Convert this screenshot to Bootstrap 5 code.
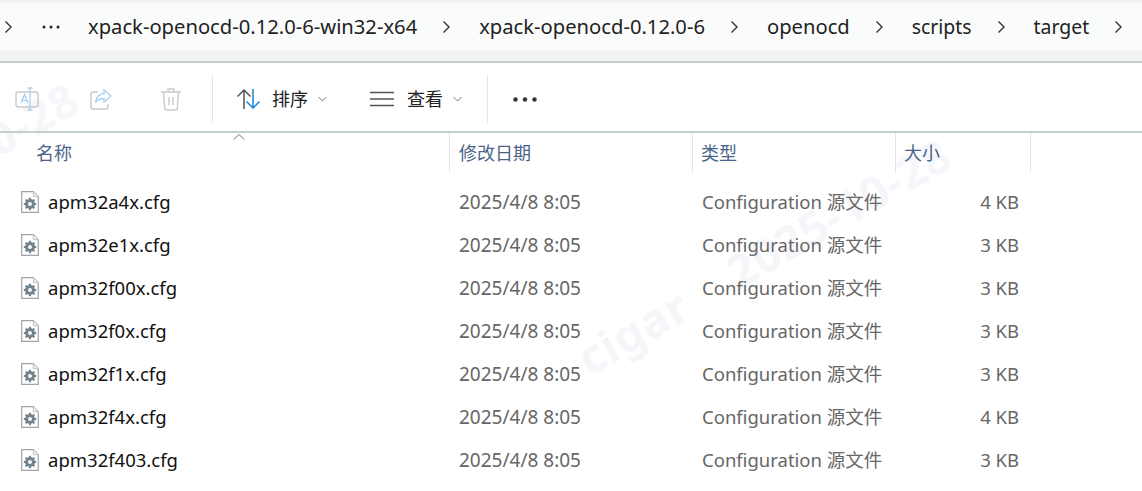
<!DOCTYPE html>
<html lang="zh-CN">

<head>
    <meta charset="UTF-8">
    <meta name="viewport" content="width=device-width, initial-scale=1.0">
    <title>target</title>
    <link href="https://cdn.jsdelivr.net/npm/bootstrap@5.3.0/dist/css/bootstrap.min.css" rel="stylesheet">
    <style>
        html, body { height: 100%; }
        body { overflow: hidden; background: #fff; font-family: "Noto Sans", "Noto Sans CJK SC", sans-serif; font-size: 19px; position: relative; }
        .top-band { height: 63px; background: #f1f4f2; border-bottom: 2px solid #c4d0c9; padding-top: 3px; }
        .crumbs { height: 47px; background: #fafbfb; color: #222; font-size: 20.2px; }
        .crumb-text { line-height: 47px; white-space: nowrap; margin-left: 28px; }
        .crumb-short { font-size: 19.4px; }
        .crumb-chev { width: 9px; height: 14px; flex: none; margin-left: 25px; }
        .crumb-first { margin-left: 4px; }
        .crumb-dots { margin-left: 29px; }
        .tool-row { height: 70px; border-bottom: 2px solid #c4d0c9; padding-left: 15px; padding-top: 4px; }
        .tool-sep { width: 1px; height: 48px; background: #e6e6e6; flex: none; }
        .tool-label { font-size: 18px; color: #222; line-height: 1; margin-left: 12px; }
        .tool-label-view { margin-left: 13px; }
        .tool-caret { margin-left: 10px; }
        .tool-share { margin-left: 48px; }
        .tool-trash { margin-left: 47px; }
        .tool-sep-a { margin-left: 30px; }
        .tool-sort { margin-left: 23px; }
        .tool-view { margin-left: 43px; }
        .tool-sep-b { margin-left: 25px; }
        .tool-more { margin-left: 25px; }
        .head-row { height: 39px; color: #4a6489; font-size: 18px; position: relative; }
        .head-cell { border-right: 1px solid #e3e3e3; padding-top: 7px; flex: none; line-height: 27px; }
        .head-name { width: 450px; padding-left: 36px; }
        .head-date { width: 243px; padding-left: 9px; }
        .head-type { width: 203px; padding-left: 8px; }
        .head-size { width: 135px; padding-left: 8px; }
        .sort-mark { position: absolute; left: 233px; top: 1px; width: 12px; height: 6px; }
        .file-list { padding-top: 9px; }
        .file-row { height: 43px; line-height: 43px; color: #666; white-space: nowrap; }
        .file-name { width: 459px; padding-left: 21px; padding-bottom: 2px; color: #111; flex: none; font-size: 18.5px; gap: 9px; }
        .file-date { width: 243px; flex: none; }
        .file-type { width: 275px; flex: none; font-size: 18.5px; line-height: 41px; }
        .file-size { width: 42px; flex: none; text-align: right; font-size: 18.5px; line-height: 41px; }
        .wm-text { position: absolute; font-size: 46px; font-weight: 700; color: #f5f6fa; white-space: nowrap; transform: rotate(-30deg); transform-origin: left bottom; pointer-events: none; letter-spacing: 1px; word-spacing: 40px; }
        .wm-one { left: 598px; top: 322px; }
        .wm-two { left: 7px; top: 104px; }
        .page-layer { position: relative; }
    </style>
</head>

<body>
    <!-- marcas de agua -->
    <div class="wm-text wm-one">cigar 2025-10-28</div>
    <div class="wm-text wm-two">0-28</div>

    <div class="page-layer">
        <div class="top-band">
            <div class="crumbs d-flex align-items-center">
                <svg class="crumb-chev crumb-first" viewBox="0 0 9 14"><path d="M1.500 1.500 7 7l-5.500 5.500" fill="none" stroke="#333" stroke-width="1.400"/></svg>
                <svg class="crumb-dots" width="18" height="4" viewBox="0 0 18 4"><circle cx="2" cy="2" r="1.500" fill="#222"/><circle cx="9" cy="2" r="1.500" fill="#222"/><circle cx="16" cy="2" r="1.500" fill="#222"/></svg>
                <span class="crumb-text">xpack-openocd-0.12.0-6-win32-x64</span>
                <svg class="crumb-chev" viewBox="0 0 9 14"><path d="M1.500 1.500 7 7l-5.500 5.500" fill="none" stroke="#333" stroke-width="1.400"/></svg>
                <span class="crumb-text">xpack-openocd-0.12.0-6</span>
                <svg class="crumb-chev" viewBox="0 0 9 14"><path d="M1.500 1.500 7 7l-5.500 5.500" fill="none" stroke="#333" stroke-width="1.400"/></svg>
                <span class="crumb-text">openocd</span>
                <svg class="crumb-chev" viewBox="0 0 9 14"><path d="M1.500 1.500 7 7l-5.500 5.500" fill="none" stroke="#333" stroke-width="1.400"/></svg>
                <span class="crumb-text crumb-short">scripts</span>
                <svg class="crumb-chev" viewBox="0 0 9 14"><path d="M1.500 1.500 7 7l-5.500 5.500" fill="none" stroke="#333" stroke-width="1.400"/></svg>
                <span class="crumb-text crumb-short">target</span>
                <svg class="crumb-chev" viewBox="0 0 9 14"><path d="M1.500 1.500 7 7l-5.500 5.500" fill="none" stroke="#333" stroke-width="1.400"/></svg>
            </div>
        </div>

        <div class="tool-row d-flex align-items-center">
            <svg width="26" height="24" viewBox="0 0 26 24" fill="none"><rect x="1" y="5" width="22" height="15" rx="2.500" stroke="#c9c9c9" stroke-width="1.400"/><path d="M6 16l3.500-8.500L13 16M7.200 13.500h4.600" stroke="#9cc9ec" stroke-width="1.200"/><path d="M15 1v22M12.500 1h5M12.500 23h5" stroke="#a8d2f2" stroke-width="1.300"/></svg>
            <svg class="tool-share" width="24" height="24" viewBox="0 0 24 24" fill="none"><path d="M9 5H4a2 2 0 0 0-2 2v13a2 2 0 0 0 2 2h13a2 2 0 0 0 2-2v-3" stroke="#c9c9c9" stroke-width="1.400"/><path d="M15 3l7 6-7 6v-3.500c-4 0-6.500 1-8.500 4 .5-5 3.500-8.500 8.500-9z" stroke="#a8d2f2" stroke-width="1.300"/></svg>
            <svg class="tool-trash" width="22" height="24" viewBox="0 0 22 24" fill="none"><path d="M1 5h20M8 5V2h6v3M3.500 5l1.200 16a2 2 0 0 0 2 2h8.600a2 2 0 0 0 2-2L18.500 5M9 10v8M13 10v8" stroke="#c9c9c9" stroke-width="1.400"/></svg>
            <div class="tool-sep tool-sep-a"></div>
            <svg class="tool-sort" width="24" height="22" viewBox="0 0 24 22" fill="none"><path d="M8 21V2M1.500 8.500 8 2l6.500 6.500" stroke="#555" stroke-width="1.500"/><path d="M17 1v19M10.500 13.500 17 20l6.500-6.500" stroke="#1a86d8" stroke-width="1.500"/></svg>
            <span class="tool-label">排序</span>
            <svg class="tool-caret" width="9" height="6" viewBox="0 0 9 6" fill="none"><path d="M.5 1 4.500 5l4-4" stroke="#777"/></svg>
            <svg class="tool-view" width="24" height="16" viewBox="0 0 24 16" fill="none"><path d="M0 1.500h24M0 8h24M0 14.500h24" stroke="#555" stroke-width="1.500"/></svg>
            <span class="tool-label tool-label-view">查看</span>
            <svg class="tool-caret" width="9" height="6" viewBox="0 0 9 6" fill="none"><path d="M.5 1 4.500 5l4-4" stroke="#777"/></svg>
            <div class="tool-sep tool-sep-b"></div>
            <svg class="tool-more" width="24" height="5" viewBox="0 0 24 5"><circle cx="2.500" cy="2.500" r="2.200" fill="#333"/><circle cx="12" cy="2.500" r="2.200" fill="#333"/><circle cx="21.500" cy="2.500" r="2.200" fill="#333"/></svg>
        </div>

        <div class="head-row d-flex">
            <svg class="sort-mark" viewBox="0 0 12 6" fill="none"><path d="M.5 5.500 6 .5l5.500 5" stroke="#777"/></svg>
            <div class="head-cell head-name">名称</div>
            <div class="head-cell head-date">修改日期</div>
            <div class="head-cell head-type">类型</div>
            <div class="head-cell head-size">大小</div>
        </div>

        <div id="listaArchivos" class="file-list"></div>
    </div>

    <template id="iconoCfg">
        <svg width="18" height="22" viewBox="0 0 18 22" fill="none"><path d="M.7.7h11.600l5 5v15.600H.7z" fill="#fff" stroke="#a3a3a3" stroke-width="1.200"/><path d="M12.300.7v5h5" fill="#eee" stroke="#c4c4c4"/><circle cx="9" cy="13" r="3.500" fill="#f4f6f7" stroke="#73838d" stroke-width="3"/><path d="M9 6.800v2M9 17.200v2M2.800 13h2M13.200 13h2M4.600 8.600l1.500 1.500M11.900 15.900l1.500 1.500M13.400 8.600l-1.500 1.500M6.100 15.900l-1.500 1.500" stroke="#73838d" stroke-width="2"/></svg>
    </template>

    <script src="https://cdn.jsdelivr.net/npm/bootstrap@5.3.0/dist/js/bootstrap.bundle.min.js"></script>
    <script>
        const archivos = [
            ['apm32a4x.cfg', '4 KB'],
            ['apm32e1x.cfg', '3 KB'],
            ['apm32f00x.cfg', '3 KB'],
            ['apm32f0x.cfg', '3 KB'],
            ['apm32f1x.cfg', '3 KB'],
            ['apm32f4x.cfg', '4 KB'],
            ['apm32f403.cfg', '3 KB']
        ];
        const lista = document.getElementById('listaArchivos');
        const icono = document.getElementById('iconoCfg').innerHTML;
        archivos.forEach(a => {
            const fila = document.createElement('div');
            fila.className = 'file-row d-flex';
            fila.innerHTML = `
                <div class="file-name d-flex align-items-center">${icono}<span>${a[0]}</span></div>
                <div class="file-date">2025/4/8 8:05</div>
                <div class="file-type">Configuration 源文件</div>
                <div class="file-size">${a[1]}</div>`;
            lista.appendChild(fila);
        });
    </script>
</body>

</html>
